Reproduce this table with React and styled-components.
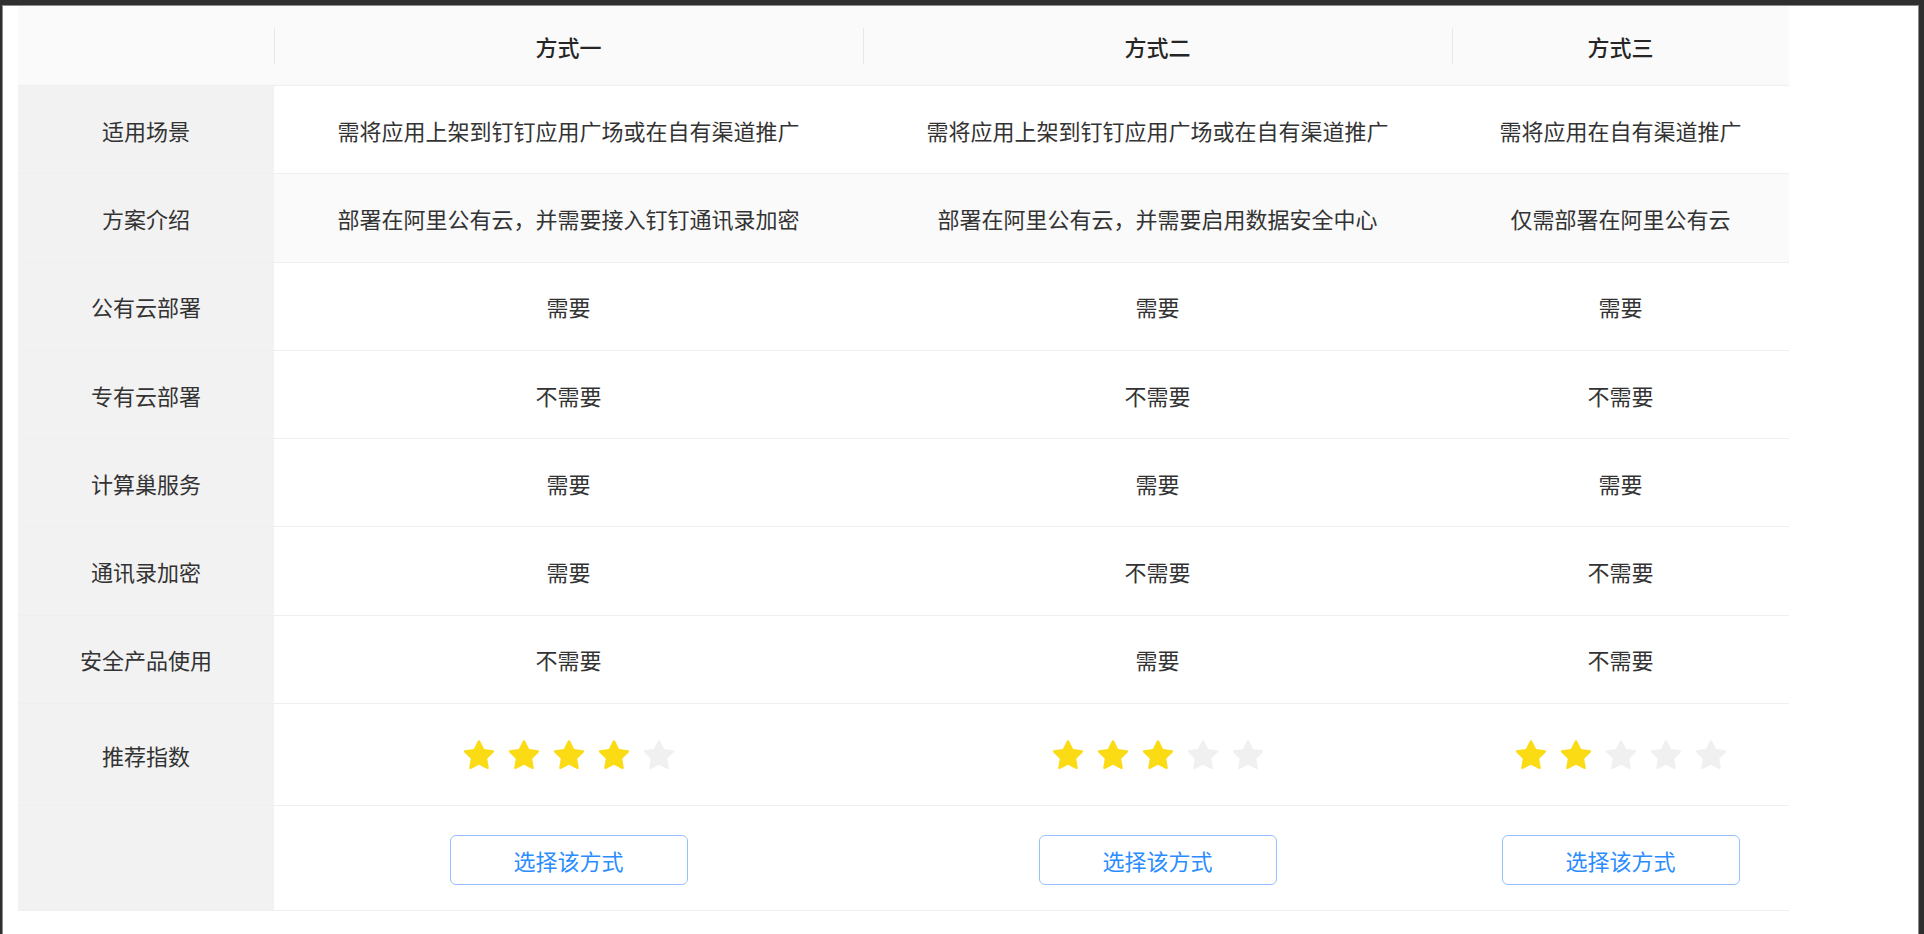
import React from "react";
import styled, { createGlobalStyle } from "styled-components";

const columns = ["方式一", "方式二", "方式三"];

const rows = [
  {
    label: "适用场景",
    values: ["需将应用上架到钉钉应用广场或在自有渠道推广", "需将应用上架到钉钉应用广场或在自有渠道推广", "需将应用在自有渠道推广"],
  },
  {
    label: "方案介绍",
    values: ["部署在阿里公有云，并需要接入钉钉通讯录加密", "部署在阿里公有云，并需要启用数据安全中心", "仅需部署在阿里公有云"],
    shaded: true,
  },
  { label: "公有云部署", values: ["需要", "需要", "需要"] },
  { label: "专有云部署", values: ["不需要", "不需要", "不需要"] },
  { label: "计算巢服务", values: ["需要", "需要", "需要"] },
  { label: "通讯录加密", values: ["需要", "不需要", "不需要"] },
  { label: "安全产品使用", values: ["不需要", "需要", "不需要"] },
];

const ratings = [4, 3, 2];

const STAR =
  "M908.1 353.1l-253.9-36.9L540.7 86.1c-3.1-6.3-8.2-11.4-14.5-14.5-15.8-7.8-35-1.3-42.9 14.5L369.8 316.2l-253.9 36.9c-7 1-13.4 4.3-18.3 9.3a32.05 32.05 0 00.6 45.3l183.7 179.1-43.4 252.9a31.95 31.95 0 0046.4 33.7L512 754l227.1 119.4c6.2 3.3 13.4 4.4 20.3 3.2 17.4-3 29.1-19.5 26.1-36.9l-43.4-252.9 183.7-179.1c5-4.9 8.3-11.3 9.3-18.3 2.7-17.5-9.5-33.7-27-36.3z";

function Star({ on }) {
  return (
    <StarIcon viewBox="64 64 896 896" $on={on}>
      <path d={STAR} />
    </StarIcon>
  );
}

function Rate({ value }) {
  return (
    <Stars>
      {[1, 2, 3, 4, 5].map((n) => (
        <Star key={n} on={n <= value} />
      ))}
    </Stars>
  );
}

export default function App() {
  return (
    <>
      <GlobalStyle />
      <Frame>
        <Table>
          <Row $height="80px">
            <HeadCell />
            {columns.map((c) => (
              <HeadCell key={c} $divider>
                {c}
              </HeadCell>
            ))}
          </Row>

          {rows.map((r) => (
            <Row key={r.label} $height="88.3px">
              <LabelCell>{r.label}</LabelCell>
              {r.values.map((v, i) => (
                <Cell key={i} $shaded={r.shaded}>
                  {v}
                </Cell>
              ))}
            </Row>
          ))}

          <Row $height="102px">
            <LabelCell>推荐指数</LabelCell>
            {ratings.map((v, i) => (
              <Cell key={i}>
                <Rate value={v} />
              </Cell>
            ))}
          </Row>

          <Row $height="105px">
            <LabelCell />
            {columns.map((c) => (
              <Cell key={c}>
                <SelectButton>选择该方式</SelectButton>
              </Cell>
            ))}
          </Row>
        </Table>
      </Frame>
    </>
  );
}

const GlobalStyle = createGlobalStyle`
  html, body {
    margin: 0;
    background: #2f2f2f;
    font-family: "Noto Sans CJK SC", "Noto Sans", sans-serif;
  }
  * { box-sizing: border-box; }
`;

const Frame = styled.div`
  margin: 5px 5px 0 2px;
  min-height: calc(100vh - 5px);
  background: #fff;
  border: 1px solid #8c8c8c;
  border-bottom: none;
  padding-left: 15px;
`;

const Table = styled.div`
  width: 1771px;
`;

const Row = styled.div`
  display: grid;
  grid-template-columns: 256px 589px 589px 337px;
  height: ${(p) => p.$height};
  border-bottom: 1px solid #efefef;
`;

const HeadCell = styled.div`
  position: relative;
  display: flex;
  align-items: center;
  justify-content: center;
  background: #fafafa;
  color: #262626;
  font-size: 22px;
  font-weight: 500;

  ${(p) =>
    p.$divider &&
    `
    &::before {
      content: "";
      position: absolute;
      left: 0;
      top: 50%;
      height: 36px;
      width: 1px;
      margin-top: -18px;
      background: #e8e8e8;
    }
  `}
`;

const Cell = styled.div`
  display: flex;
  align-items: center;
  justify-content: center;
  background: ${(p) => (p.$shaded ? "#fafafa" : "#fff")};
  color: #333;
  font-size: 22px;
`;

const LabelCell = styled(Cell)`
  background: #f2f2f2;
`;

const Stars = styled.div`
  display: flex;
  gap: 13px;
  margin-top: 3px;
`;

const StarIcon = styled.svg`
  width: 32px;
  height: 32px;
  fill: ${(p) => (p.$on ? "#fadb14" : "#f0f0f0")};
`;

const SelectButton = styled.button`
  width: 238px;
  height: 50px;
  border: 1.5px solid #96c0ff;
  border-radius: 6px;
  background: #fff;
  color: #2a8cff;
  font-family: inherit;
  font-size: 22px;
  padding: 0;
  margin-top: 3px;
  cursor: pointer;
`;
